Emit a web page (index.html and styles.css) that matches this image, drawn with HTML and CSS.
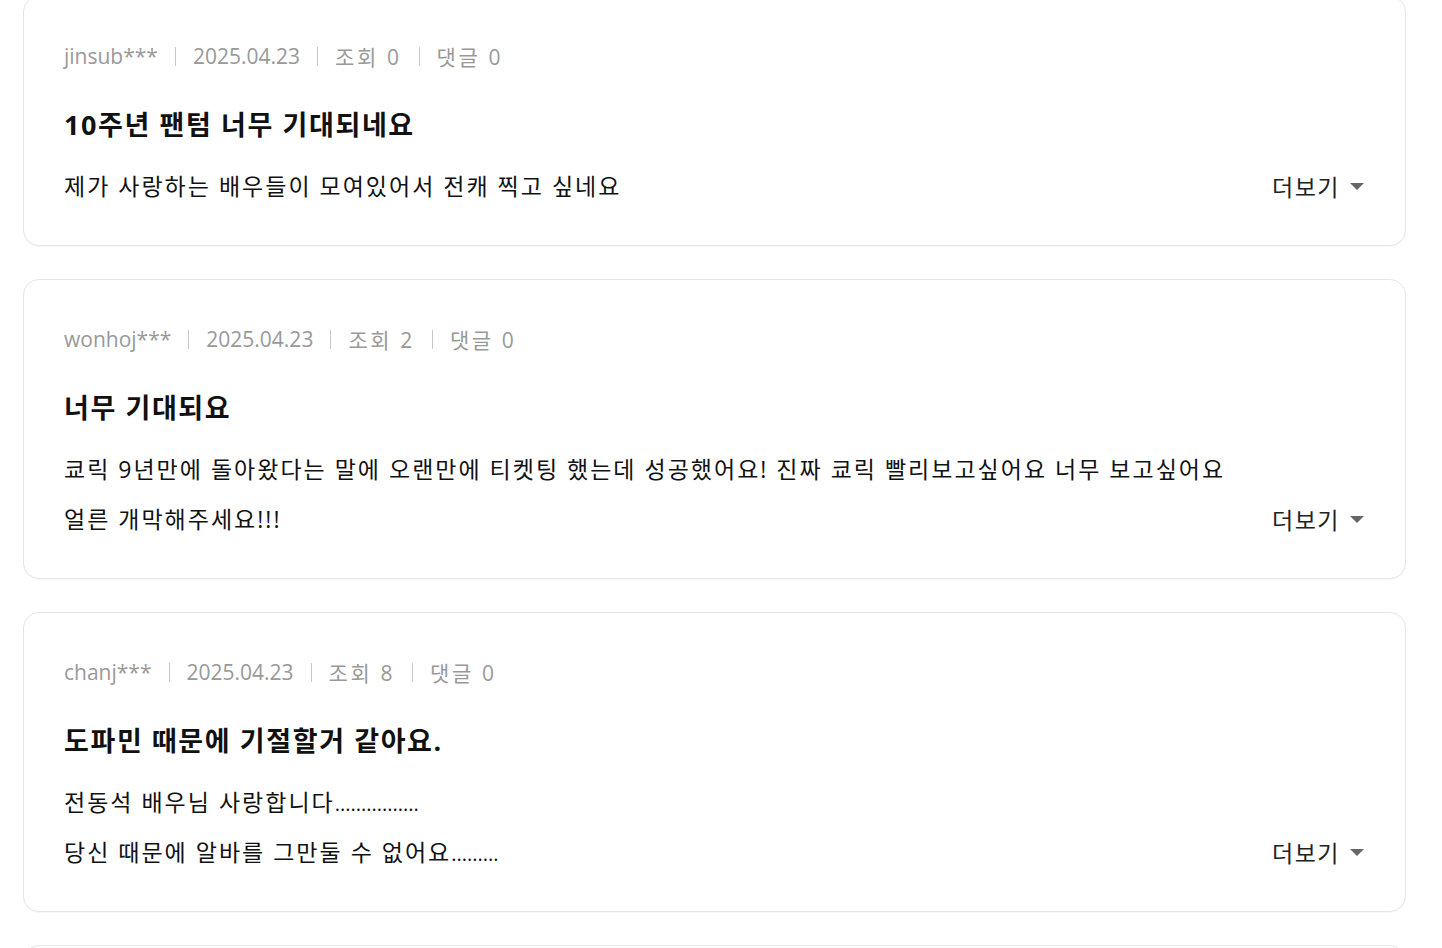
FILE: index.html
```html
<!DOCTYPE html>
<html lang="ko">

<head>
    <meta charset="UTF-8">
    <meta name="viewport" content="width=device-width, initial-scale=1.0">
    <title>관람후기</title>
    <link rel="stylesheet" href="styles.css">
</head>

<body>
    <div class="review-list">
        <!-- review 1 -->
        <div class="review-card">
            <div class="review-meta">
                <span>jinsub***</span>
                <span class="sep"></span>
                <span>2025.04.23</span>
                <span class="sep"></span>
                <span class="ko">조회 0</span>
                <span class="sep"></span>
                <span class="ko">댓글 0</span>
            </div>
            <h2 class="review-title">10주년 팬텀 너무 기대되네요</h2>
            <div class="review-body">
                <p class="review-text">제가 사랑하는 배우들이 모여있어서 전캐 찍고 싶네요</p>
                <button class="more-btn" type="button">더보기 <span class="caret"></span></button>
            </div>
        </div>

        <!-- review 2 -->
        <div class="review-card">
            <div class="review-meta">
                <span>wonhoj***</span>
                <span class="sep"></span>
                <span>2025.04.23</span>
                <span class="sep"></span>
                <span class="ko">조회 2</span>
                <span class="sep"></span>
                <span class="ko">댓글 0</span>
            </div>
            <h2 class="review-title">너무 기대되요</h2>
            <div class="review-body">
                <p class="review-text">쿄릭 9년만에 돌아왔다는 말에 오랜만에 티켓팅 했는데 성공했어요! 진짜 쿄릭 빨리보고싶어요 너무 보고싶어요<br>얼른 개막해주세요!!!</p>
                <button class="more-btn" type="button">더보기 <span class="caret"></span></button>
            </div>
        </div>

        <!-- review 3 -->
        <div class="review-card">
            <div class="review-meta">
                <span>chanj***</span>
                <span class="sep"></span>
                <span>2025.04.23</span>
                <span class="sep"></span>
                <span class="ko">조회 8</span>
                <span class="sep"></span>
                <span class="ko">댓글 0</span>
            </div>
            <h2 class="review-title">도파민 때문에 기절할거 같아요.</h2>
            <div class="review-body">
                <p class="review-text">전동석 배우님 사랑합니다<span class="dots">................</span><br>당신 때문에 알바를 그만둘 수 없어요<span class="dots">.........</span></p>
                <button class="more-btn" type="button">더보기 <span class="caret"></span></button>
            </div>
        </div>

        <!-- next review, below the fold -->
        <div class="review-card review-card-next"></div>
    </div>
</body>

</html>
```

FILE: styles.css
```css
/* Reset styles */
* {
    margin: 0;
    padding: 0;
    box-sizing: border-box;
}

body {
    font-family: "Open Sans", "Noto Sans CJK KR", sans-serif;
    background-color: #fff;
    color: #111;
}

.review-list {
    width: 1383px;
    margin: -4px 0 0 23px;
    display: flex;
    flex-direction: column;
    gap: 33px;
}

.review-card {
    border: 1px solid #e6e6e6;
    border-radius: 16px;
    padding: 39px 41px 34px 40px;
    background-color: #fff;
    box-shadow: 0 1px 1px rgba(0, 0, 0, 0.03);
}

.review-card-next {
    height: 120px;
}

.review-meta {
    display: flex;
    align-items: center;
    gap: 17px;
    height: 40px;
    font-size: 21px;
    color: #999;
}

.review-meta .ko {
    letter-spacing: 2.6px;
}

.review-meta .sep {
    width: 1px;
    height: 19px;
    background-color: #c8c8c8;
}

.review-title {
    margin-top: 29px;
    font-size: 27px;
    line-height: 40px;
    font-weight: 700;
    letter-spacing: 1.6px;
    color: #111;
}

.review-body {
    margin-top: 16px;
    display: flex;
    justify-content: space-between;
    align-items: flex-end;
}

.review-text {
    font-size: 23px;
    line-height: 50px;
    letter-spacing: 2px;
    color: #111;
}

.review-text .dots {
    letter-spacing: 0;
    font-size: 20px;
    line-height: 1;
}

.more-btn {
    display: flex;
    align-items: center;
    gap: 10px;
    height: 50px;
    border: none;
    background: none;
    font-family: inherit;
    font-size: 23px;
    letter-spacing: 1.5px;
    color: #222;
    cursor: pointer;
}

.caret {
    width: 0;
    height: 0;
    border-left: 7px solid transparent;
    border-right: 7px solid transparent;
    border-top: 7px solid #666;
}
```
